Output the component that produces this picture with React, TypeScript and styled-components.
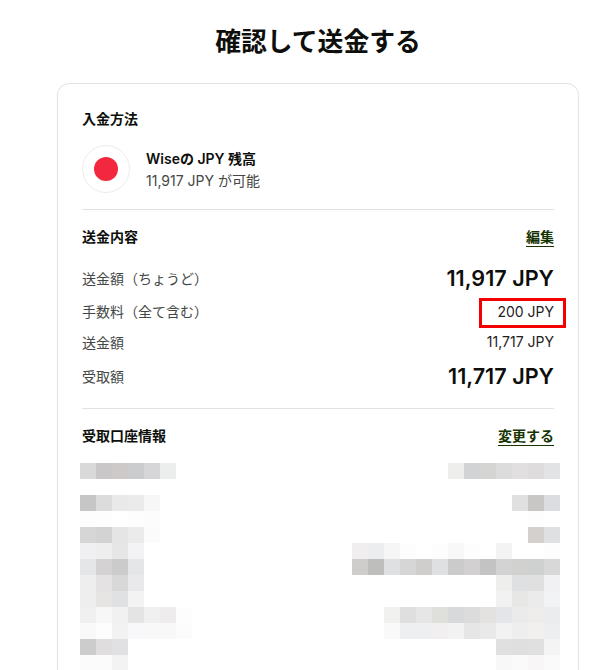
import React from "react";
import styled, { createGlobalStyle } from "styled-components";

const Global = createGlobalStyle`
  html, body { margin: 0; padding: 0; background: #fff; height: 670px; overflow: hidden; }
  body { font-family: Inter, "Noto Sans CJK JP", sans-serif; color: #0e0f0c; }
`;

const Page = styled.main`
  width: 522px;
  margin-left: 57px;
  height: 670px;
  overflow: hidden;
`;

const Title = styled.h1`
  margin: 0;
  height: 83px;
  padding-top: 25px;
  box-sizing: border-box;
  font-size: 25.8px;
  line-height: 34px;
  font-weight: 700;
  text-align: center;
`;

const Card = styled.section`
  border: 1px solid #e2e2e2;
  border-radius: 12px;
  padding: 24px 24px 0;
  height: 700px;
  box-sizing: border-box;
`;

const SectionLabel = styled.h2`
  margin: 0;
  font-size: 14px;
  line-height: 22px;
  font-weight: 700;
`;

const Method = styled.div`
  display: flex;
  align-items: center;
  gap: 16px;
  margin-top: 15px;
`;

const FlagCircle = styled.div`
  width: 48px;
  height: 48px;
  box-sizing: border-box;
  border: 1px solid #ececec;
  border-radius: 50%;
  display: flex;
  align-items: center;
  justify-content: center;
`;

const FlagDot = styled.div`
  width: 24px;
  height: 24px;
  border-radius: 50%;
  background: #f3283f;
`;

const MethodText = styled.div`
  display: flex;
  flex-direction: column;
  margin-top: 2px;
`;

const MethodName = styled.div`
  font-size: 14px;
  line-height: 22px;
  font-weight: 600;
`;

const MethodSub = styled.div`
  font-size: 14px;
  line-height: 22px;
  color: #454745;
`;

const Divider = styled.hr<{ $top: number }>`
  border: 0;
  border-top: 1px solid #e2e2e2;
  margin: ${(p) => p.$top}px 0 0;
`;

const SectionHead = styled.div<{ $top: number }>`
  display: flex;
  justify-content: space-between;
  align-items: center;
  height: 22px;
  margin-top: ${(p) => p.$top}px;
`;

const EditLink = styled.a`
  font-size: 14px;
  line-height: 18px;
  font-weight: 600;
  color: #163300;
  border-bottom: 1px solid #163300;
  text-decoration: none;
`;

const Row = styled.div<{ $h: number }>`
  display: flex;
  justify-content: space-between;
  align-items: center;
  height: ${(p) => p.$h}px;
`;

const RowLabel = styled.span`
  font-size: 14px;
  color: #454745;
`;

const BigAmount = styled.span`
  font-size: 21.6px;
  font-weight: 600;
`;

const SmallAmount = styled.span`
  font-size: 14px;
  color: #1f211e;
`;

const FeeAmount = styled(SmallAmount)`
  position: relative;
  &::after {
    content: "";
    position: absolute;
    left: -18px;
    right: -12px;
    top: -5px;
    bottom: -8px;
    border: 3px solid #f50000;
  }
`;

const Rows = styled.div`
  margin-top: 12px;
`;

const Mosaic = styled.div`
  display: flex;
  justify-content: space-between;
  margin: 16px -6px 0 -2px;
`;

const MosaicSide = styled.div<{ $cols: number }>`
  display: grid;
  grid-template-columns: repeat(${(p) => p.$cols}, 16px);
  grid-auto-rows: 16px;
`;

const left = [
  "d9d9d9 c9c7c8 ccc9c8 cbccce d6d6d8 eceeee -",
  "- - - - - - -",
  "c6c6c6 dcdcdc e9e9e9 ebebeb f7f7f7 - -",
  "fdfdfd fdfdfd - fdfdfd fcfcfc - -",
  "d6d6d6 d3d3d3 e5e5e5 ebebeb fbfbfb - -",
  "f0f0f2 eeeeee e6e6e6 f3f3f5 - - -",
  "e5e6e8 d4d2d3 cbcbcb e5e6e8 - - -",
  "eeeeee e4e2e3 d8d8d8 e9e9eb - - -",
  "eeeeee e6e5e3 dfe1e3 f3f3f3 - - -",
  "f0f0f0 f7f7f7 f1f1f1 e4e4e4 f0f0f0 eeecec fdfdfd",
  "f9f9f9 fdfdfd f2f2f2 f8f8fa f8f8f8 f8f8f8 fcfcfc",
  "cccccc dfdddd e1e1e3 - - - -",
  "fbfbfb fbfbfb f3f3f3 - - - -",
];

const right = [
  "- - - - - - eeeeec d2d3d5 d5d5d3 dcdcdc e1dfe0 dedcdd e2e3e5",
  "- - - - - - - - - - - - -",
  "- - - - - - - - - - e0e0e0 c8c7c5 dcdde0",
  "- - - - - - - - - - - fdfdfd -",
  "- - - - - - - - - - - d3d0ce dfe0e2",
  "f0eeef ecedee f6f6f6 fdfdfd - fdfdfd f8f8f8 fdfdfd - f3f3f3 - - fdfdfd",
  "cecdcb bebfbd dfe0e2 d6d6d6 cfcecc dfe0e2 cbcbcb d2d0d1 c3c3c3 d3d3d3 d1d1cf ced1d0 d8d8d8",
  "- - - - - - - - - eeeeec dfe0e2 e0e0e0 f1f1f3",
  "- - - - - - - - - f2f2f2 e7e7e5 ebebeb f2f3f5",
  "- - f1f1ef dfdfdf e6e6e6 dfdfdb d8d9db dcdcdc e3e2e0 e3e5e8 ebebeb eeedeb ebecee",
  "- - f9f9f9 eeeff1 eeeff1 f1eff0 f2f2f2 e6e6e6 e9e9e9 f2f2f2 eeeeee f1f0ee edeef0",
  "- - - - - - - - - e0e0e0 dfdfdf e0e0e0 f4f4f4",
  "- - - - - - - - - f8f8f8 fafafa f8f6f7 fafafa",
];

const Blocks = ({ rows, cols }: { rows: string[]; cols: number }) => (
  <MosaicSide $cols={cols}>
    {rows.flatMap((r, i) =>
      r.split(" ").map((c, j) => (
        <div key={`${i}-${j}`} style={{ background: c === "-" ? "transparent" : `#${c}` }} />
      ))
    )}
  </MosaicSide>
);

export default function App() {
  return (
    <>
      <Global />
      <Page>
        <Title>確認して送金する</Title>
        <Card>
          <SectionLabel>入金方法</SectionLabel>
          <Method>
            <FlagCircle>
              <FlagDot />
            </FlagCircle>
            <MethodText>
              <MethodName>Wiseの JPY 残高</MethodName>
              <MethodSub>11,917 JPY が可能</MethodSub>
            </MethodText>
          </Method>
          <Divider $top={16} />
          <SectionHead $top={16}>
            <SectionLabel>送金内容</SectionLabel>
            <EditLink>編集</EditLink>
          </SectionHead>
          <Rows>
            <Row $h={36}>
              <RowLabel>送金額（ちょうど）</RowLabel>
              <BigAmount>11,917 JPY</BigAmount>
            </Row>
            <Row $h={30}>
              <RowLabel>手数料（全て含む）</RowLabel>
              <FeeAmount>200 JPY</FeeAmount>
            </Row>
            <Row $h={31}>
              <RowLabel>送金額</RowLabel>
              <SmallAmount>11,717 JPY</SmallAmount>
            </Row>
            <Row $h={38}>
              <RowLabel>受取額</RowLabel>
              <BigAmount>11,717 JPY</BigAmount>
            </Row>
          </Rows>
          <Divider $top={13} />
          <SectionHead $top={16}>
            <SectionLabel>受取口座情報</SectionLabel>
            <EditLink>変更する</EditLink>
          </SectionHead>
          <Mosaic>
            <Blocks rows={left} cols={7} />
            <Blocks rows={right} cols={13} />
          </Mosaic>
        </Card>
      </Page>
    </>
  );
}
